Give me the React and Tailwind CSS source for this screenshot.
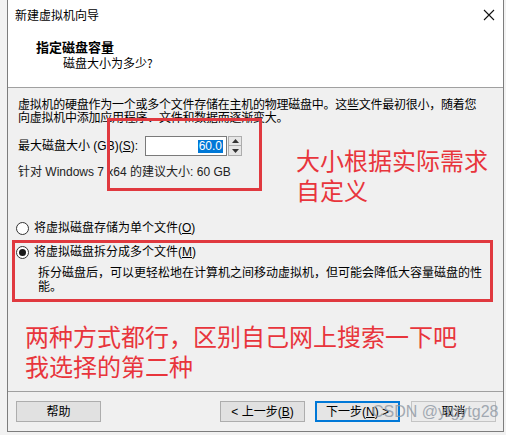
import { useState } from 'react'

const ui = { fontFamily: '"Liberation Sans", "Noto Sans CJK SC", sans-serif' }
const cjk = { fontFamily: '"Noto Sans CJK SC", "Liberation Sans", sans-serif' }

function Radio({ checked, children }) {
  return (
    <div className="flex items-center h-[14px] text-[12px] leading-[14px] text-black">
      <span className="w-[13px] h-[13px] rounded-full border border-[#333] bg-white flex items-center justify-center">
        {checked && <span className="w-[7px] h-[7px] rounded-full bg-[#1a1a1a]" />}
      </span>
      <span className="ml-[5px]">{children}</span>
    </div>
  )
}

function Btn({ children, focus, className = '' }) {
  return (
    <button
      className={`h-[21px] w-[85px] text-[12px] leading-[14px] text-black flex items-center justify-center ${
        focus ? 'border-2 border-[#0078d7] bg-[#e5e5e5]' : 'border border-[#adadad] bg-[#e1e1e1]'
      } ${className}`}
    >
      {children}
    </button>
  )
}

export default function App() {
  const [size, setSize] = useState('60.0')
  const [mode, setMode] = useState('multi')

  return (
    <div className="relative w-[506px] h-[435px] bg-[#f2f2f2] overflow-hidden" style={ui}>
      {/* 对话框窗口 */}
      <div className="ml-[7px] w-[497px] h-[432px] border-l border-r border-b border-[#7d7d7d] bg-[#f0f0f0] flex flex-col">
        {/* 标题栏 */}
        <div className="h-[30px] bg-white flex items-center justify-between pl-[7px] pr-[8px]">
          <span className="text-[12px] text-black" style={cjk}>新建虚拟机向导</span>
          <svg width="12" height="12" viewBox="0 0 12 12">
            <path d="M1 1 L11 11 M11 1 L1 11" stroke="#111" strokeWidth="1.1" />
          </svg>
        </div>

        {/* 页头 */}
        <div className="h-[58px] bg-white border-b border-[#a0a0a0] pl-[28px] pt-[9px]">
          <div className="text-[13px] leading-[16px] font-bold text-black" style={cjk}>指定磁盘容量</div>
          <div className="text-[12px] leading-[16px] text-black ml-[27px]" style={cjk}>磁盘大小为多少?</div>
        </div>

        {/* 内容 */}
        <div className="flex-1 pl-[10px] pt-[11px] flex flex-col">
          <p className="text-[12px] leading-[13px] text-black tracking-[-0.25px]">
            虚拟机的硬盘作为一个或多个文件存储在主机的物理磁盘中。这些文件最初很小，随着您
            <br />
            向虚拟机中添加应用程序、文件和数据而逐渐变大。
          </p>

          <div className="flex items-center mt-[11px] h-[20px]">
            <span className="text-[12px] text-black w-[127px]">
              最大磁盘大小 (GB)(<u>S</u>):
            </span>
            <div className="w-[82px] h-[20px] bg-white border border-[#7a7a7a] flex items-center justify-end pr-[3px]">
              <span className="bg-[#0078d7] text-white text-[12px] leading-[13px] px-[1px]">{size}</span>
            </div>
            <div className="flex flex-col ml-[1px] h-[20px]">
              <button
                onClick={() => setSize('61.0')}
                className="w-[14px] h-[10px] bg-[#e6e6e6] border border-[#adadad] flex items-center justify-center"
              >
                <svg width="7" height="4" viewBox="0 0 7 4"><path d="M0 4 L3.5 0 L7 4Z" fill="#333" /></svg>
              </button>
              <button
                onClick={() => setSize('59.0')}
                className="w-[14px] h-[10px] bg-[#e6e6e6] border border-t-0 border-[#adadad] flex items-center justify-center"
              >
                <svg width="7" height="4" viewBox="0 0 7 4"><path d="M0 0 L3.5 4 L7 0Z" fill="#333" /></svg>
              </button>
            </div>
          </div>

          <div className="mt-[9px] text-[12px] leading-[14px] text-[#222]">
            针对 Windows 7 x64 的建议大小: 60 GB
          </div>

          <div className="mt-[42px] ml-[-2px] cursor-pointer" onClick={() => setMode('single')}>
            <Radio checked={mode === 'single'}>
              将虚拟磁盘存储为单个文件(<u>O</u>)
            </Radio>
          </div>
          <div className="mt-[10px] ml-[-2px] cursor-pointer" onClick={() => setMode('multi')}>
            <Radio checked={mode === 'multi'}>
              将虚拟磁盘拆分成多个文件(<u>M</u>)
            </Radio>
          </div>
          <p className="mt-[7px] ml-[20px] text-[12px] leading-[14px] text-black">
            拆分磁盘后，可以更轻松地在计算机之间移动虚拟机，但可能会降低大容量磁盘的性
            <br />
            能。
          </p>

          {/* 批注 */}
          <div className="mt-[27px] ml-[7px] text-[24px] leading-[30px] text-[#e8353c]" style={cjk}>
            两种方式都行，区别自己网上搜索一下吧
            <br />
            我选择的第二种
          </div>
        </div>

        {/* 底部按钮 */}
        <div className="h-[40px] border-t border-[#a0a0a0] flex items-start pt-[9px] pl-[8px] pr-[7px]">
          <Btn>帮助</Btn>
          <div className="flex-1" />
          <Btn>&lt; 上一步(<u>B</u>)</Btn>
          <Btn focus className="ml-[10px]">下一步(<u>N</u>) &gt;</Btn>
          <Btn className="ml-[11px] bg-[#ebebeb] border-[#c4c4c4]">取消</Btn>
        </div>
      </div>

      {/* 红色标注框 */}
      <div className="absolute left-[107px] top-[118px] w-[155px] h-[73px] border-[3px] border-[#e0393f]" />
      <div className="absolute left-[12px] top-[240px] w-[481px] h-[62px] border-[3px] border-[#e0393f]" />
      <div className="absolute left-[296px] top-[145px] text-[24px] leading-[30px] text-[#e8353c]" style={cjk}>
        大小根据实际需求
        <br />
        自定义
      </div>

      {/* 水印 */}
      <div className="absolute left-[372px] top-[402px] text-[16px] leading-[20px] text-[#8f98a3] opacity-80 pointer-events-none">
        CSDN @ytgytg28
      </div>
    </div>
  )
}
